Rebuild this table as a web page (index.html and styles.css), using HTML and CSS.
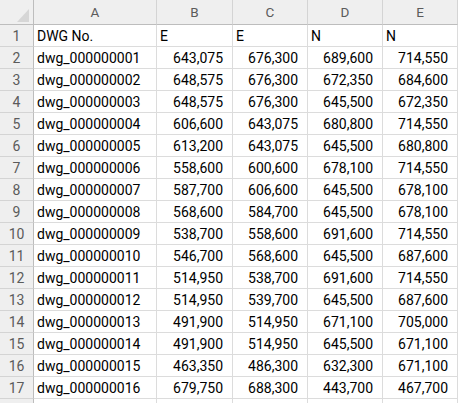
FILE: index.html
```html
<!DOCTYPE html>
<html>
<head>
<meta charset="utf-8">
<link rel="stylesheet" href="styles.css">
</head>
<body>
<div class="sheet">
  <div class="corner"><span class="tri"></span></div>
  <div class="colh">A</div><div class="colh">B</div><div class="colh">C</div><div class="colh">D</div><div class="colh">E</div>

  <div class="rowh">1</div><div class="c">DWG No.</div><div class="c">E</div><div class="c">E</div><div class="c">N</div><div class="c">N</div>
  <div class="rowh">2</div><div class="c">dwg_000000001</div><div class="c n">643,075</div><div class="c n">676,300</div><div class="c n">689,600</div><div class="c n">714,550</div>
  <div class="rowh">3</div><div class="c">dwg_000000002</div><div class="c n">648,575</div><div class="c n">676,300</div><div class="c n">672,350</div><div class="c n">684,600</div>
  <div class="rowh">4</div><div class="c">dwg_000000003</div><div class="c n">648,575</div><div class="c n">676,300</div><div class="c n">645,500</div><div class="c n">672,350</div>
  <div class="rowh">5</div><div class="c">dwg_000000004</div><div class="c n">606,600</div><div class="c n">643,075</div><div class="c n">680,800</div><div class="c n">714,550</div>
  <div class="rowh">6</div><div class="c">dwg_000000005</div><div class="c n">613,200</div><div class="c n">643,075</div><div class="c n">645,500</div><div class="c n">680,800</div>
  <div class="rowh">7</div><div class="c">dwg_000000006</div><div class="c n">558,600</div><div class="c n">600,600</div><div class="c n">678,100</div><div class="c n">714,550</div>
  <div class="rowh">8</div><div class="c">dwg_000000007</div><div class="c n">587,700</div><div class="c n">606,600</div><div class="c n">645,500</div><div class="c n">678,100</div>
  <div class="rowh">9</div><div class="c">dwg_000000008</div><div class="c n">568,600</div><div class="c n">584,700</div><div class="c n">645,500</div><div class="c n">678,100</div>
  <div class="rowh">10</div><div class="c">dwg_000000009</div><div class="c n">538,700</div><div class="c n">558,600</div><div class="c n">691,600</div><div class="c n">714,550</div>
  <div class="rowh">11</div><div class="c">dwg_000000010</div><div class="c n">546,700</div><div class="c n">568,600</div><div class="c n">645,500</div><div class="c n">687,600</div>
  <div class="rowh">12</div><div class="c">dwg_000000011</div><div class="c n">514,950</div><div class="c n">538,700</div><div class="c n">691,600</div><div class="c n">714,550</div>
  <div class="rowh">13</div><div class="c">dwg_000000012</div><div class="c n">514,950</div><div class="c n">539,700</div><div class="c n">645,500</div><div class="c n">687,600</div>
  <div class="rowh">14</div><div class="c">dwg_000000013</div><div class="c n">491,900</div><div class="c n">514,950</div><div class="c n">671,100</div><div class="c n">705,000</div>
  <div class="rowh">15</div><div class="c">dwg_000000014</div><div class="c n">491,900</div><div class="c n">514,950</div><div class="c n">645,500</div><div class="c n">671,100</div>
  <div class="rowh">16</div><div class="c">dwg_000000015</div><div class="c n">463,350</div><div class="c n">486,300</div><div class="c n">632,300</div><div class="c n">671,100</div>
  <div class="rowh">17</div><div class="c">dwg_000000016</div><div class="c n">679,750</div><div class="c n">688,300</div><div class="c n">443,700</div><div class="c n">467,700</div>
  <div class="rowh"></div><div class="c"></div><div class="c"></div><div class="c"></div><div class="c"></div><div class="c"></div>
</div>
</body>
</html>
```
FILE: styles.css
```css
html, body {
  margin: 0;
  padding: 0;
  background: #ffffff;
  overflow: hidden;
}
.sheet {
  display: grid;
  grid-template-columns: 34px 123px 76px 75px 75px 75px;
  grid-template-rows: 25px;
  grid-auto-rows: 22px;
  font-family: Roboto, "Noto Sans", sans-serif;
  font-size: 14px;
  color: #000;
}
.sheet > div {
  box-sizing: border-box;
  border-right: 1px solid #dcdcdc;
  border-bottom: 1px solid #dcdcdc;
  white-space: nowrap;
  overflow: hidden;
  display: flex;
  align-items: center;
}
.corner {
  background: #efefef;
  position: relative;
  border-right-color: #bdbdbd !important;
  border-bottom-color: #bdbdbd !important;
}
.tri {
  position: absolute;
  right: 4px;
  bottom: 2px;
  width: 0;
  height: 0;
  border-left: 12px solid transparent;
  border-bottom: 13px solid #d6d6d6;
}
.colh {
  background: #efefef;
  color: #5b5b5b;
  justify-content: center;
  border-right-color: #d4d4d4 !important;
  border-bottom-color: #bdbdbd !important;
  font-size: 13.5px;
}
.rowh {
  background: #efefef;
  color: #5b5b5b;
  justify-content: center;
  border-right-color: #bdbdbd !important;
  border-bottom-color: #d4d4d4 !important;
  font-size: 14px;
}
.c {
  padding-left: 3px;
}
.c.n {
  justify-content: flex-end;
  padding-left: 0;
  padding-right: 9px;
}
```
